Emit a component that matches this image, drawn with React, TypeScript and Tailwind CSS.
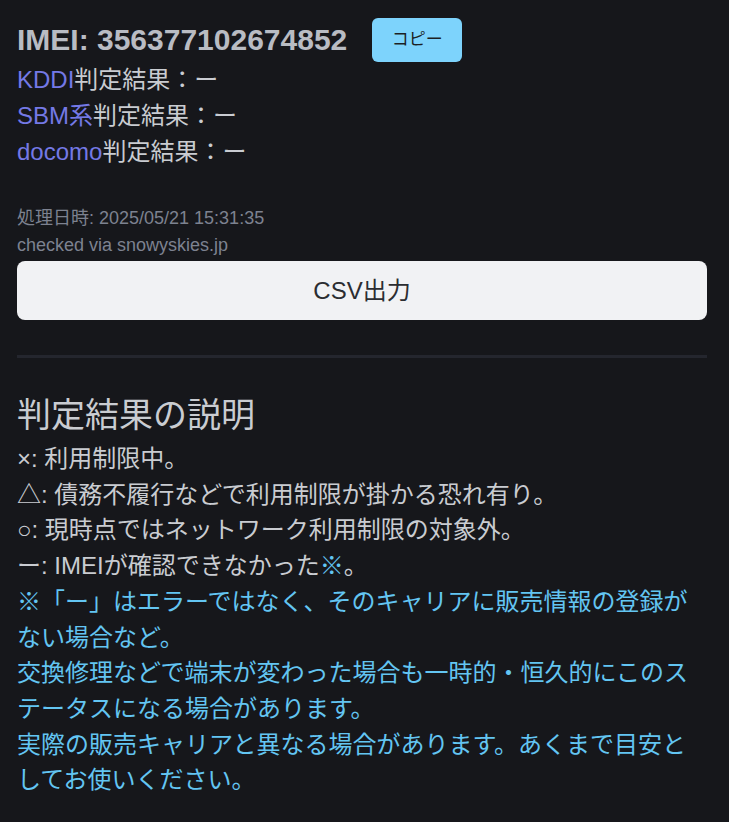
import React from 'react';

const font = { fontFamily: '"Liberation Sans", "Noto Sans CJK JP", sans-serif' };

const results = [
  { carrier: 'KDDI', value: 'ー' },
  { carrier: 'SBM系', value: 'ー' },
  { carrier: 'docomo', value: 'ー' },
];

export default function App() {
  return (
    <div className="min-h-[822px] w-[729px] bg-[#16171b] px-[17px] pt-[18px]" style={font}>
      <div className="w-[690px]">
        <div className="flex items-center gap-[25px]">
          <h1 className="text-[30px] font-bold leading-none text-[#b9bcc3]">IMEI: 356377102674852</h1>
          <button className="h-[44px] w-[90px] rounded-md bg-[#7dd3fc] text-[17px] text-[#1c1f24]">コピー</button>
        </div>

        <div className="text-[24px] leading-[36px] text-[#c9ccd1]">
          {results.map(r => (
            <p key={r.carrier}>
              <span className="text-[#7479e6]">{r.carrier}</span>判定結果：{r.value}
            </p>
          ))}
        </div>

        <div className="mt-[35px] text-[18px] leading-[27px] text-[#7d8290]">
          <p>処理日時: 2025/05/21 15:31:35</p>
          <p>checked via snowyskies.jp</p>
        </div>

        <button className="mt-[2px] flex h-[59px] w-full items-center justify-center rounded-lg bg-[#f1f2f4] text-[24px] text-[#2b2d31]">
          CSV出力
        </button>

        <hr className="mt-[35px] h-[3px] border-0 bg-[#24262e]" />

        <section className="mt-[32px]">
          <h2 className="text-[34px] leading-[51px] text-[#c9ccd1]">判定結果の説明</h2>
          <div className="text-[24px] leading-[35.7px] text-[#c9ccd1]">
            <p>×: 利用制限中。</p>
            <p>△: 債務不履行などで利用制限が掛かる恐れ有り。</p>
            <p>○: 現時点ではネットワーク利用制限の対象外。</p>
            <p>
              ー: IMEIが確認できなかった<span className="text-[#63c5f2]">※</span>。
            </p>
            <div className="text-[#63c5f2]">
              <p>※「ー」はエラーではなく、そのキャリアに販売情報の登録がない場合など。</p>
              <p>交換修理などで端末が変わった場合も一時的・恒久的にこのステータスになる場合があります。</p>
              <p>実際の販売キャリアと異なる場合があります。あくまで目安としてお使いください。</p>
            </div>
          </div>
        </section>
      </div>
    </div>
  );
}
